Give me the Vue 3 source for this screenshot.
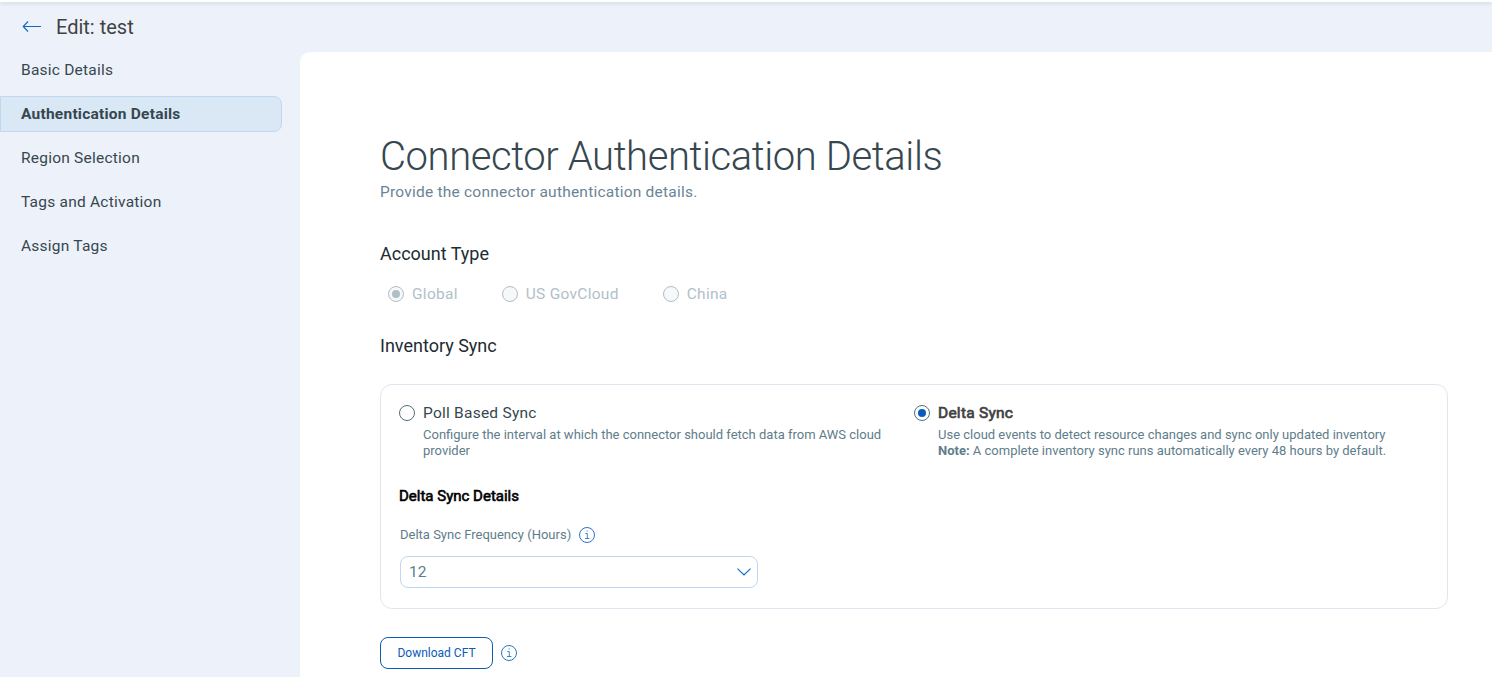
<template>
  <div class="page">
    <div class="top-strip"></div>
    <header class="header">
      <svg class="back" width="20" height="12" viewBox="0 0 20 12">
        <path d="M19 5.5H1.4M6 0.5L1.2 5.5l4.8 5" fill="none" stroke="currentColor" stroke-width="1.1" />
      </svg>
      <span class="title">Edit: test</span>
    </header>
    <div class="body">
      <nav class="sidebar">
        <div
          v-for="step in steps"
          :key="step"
          class="step"
          :class="{ active: step === current }"
          @click="current = step"
        >{{ step }}</div>
      </nav>
      <main class="content">
        <h1>Connector Authentication Details</h1>
        <p class="subtitle">Provide the connector authentication details.</p>

        <h2>Account Type</h2>
        <div class="accounts">
          <div v-for="a in accounts" :key="a" class="option disabled">
            <span class="radio" :class="{ checked: a === 'Global' }"></span>
            <span>{{ a }}</span>
          </div>
        </div>

        <h2 class="inventory">Inventory Sync</h2>
        <section class="card">
          <div class="modes">
            <div class="mode" @click="mode = 'poll'">
              <span class="radio" :class="{ checked: mode === 'poll' }"></span>
              <div>
                <div class="mode-name" :class="{ bold: mode === 'poll' }">Poll Based Sync</div>
                <div class="desc poll-desc">Configure the interval at which the connector should fetch data from AWS cloud provider</div>
              </div>
            </div>
            <div class="mode" @click="mode = 'delta'">
              <span class="radio" :class="{ checked: mode === 'delta' }"></span>
              <div>
                <div class="mode-name" :class="{ bold: mode === 'delta' }">Delta Sync</div>
                <div class="desc">
                  Use cloud events to detect resource changes and sync only updated inventory<br />
                  <b>Note:</b> A complete inventory sync runs automatically every 48 hours by default.
                </div>
              </div>
            </div>
          </div>
          <h3>Delta Sync Details</h3>
          <div class="label">
            <span>Delta Sync Frequency (Hours)</span>
            <svg class="info" width="16" height="16" viewBox="0 0 16 16">
              <circle cx="8" cy="8" r="7.5" />
              <path d="M6.3 6.5h2v5M6 11.5h4.4M7.6 4h1.2" />
            </svg>
          </div>
          <div class="select">
            <span>{{ frequency }}</span>
            <svg width="14" height="8" viewBox="0 0 14 8">
              <path d="M0.5 0.7L7 7l6.5-6.3" fill="none" stroke="currentColor" stroke-width="1.1" />
            </svg>
          </div>
        </section>

        <div class="download">
          <button>Download CFT</button>
          <svg class="info" width="16" height="16" viewBox="0 0 16 16">
            <circle cx="8" cy="8" r="7.5" />
            <path d="M6.3 6.5h2v5M6 11.5h4.4M7.6 4h1.2" />
          </svg>
        </div>
      </main>
    </div>
  </div>
</template>

<script setup>
import { ref } from 'vue'

const steps = ['Basic Details', 'Authentication Details', 'Region Selection', 'Tags and Activation', 'Assign Tags']
const current = ref('Authentication Details')
const accounts = ['Global', 'US GovCloud', 'China']
const mode = ref('delta')
const frequency = ref(12)
</script>

<style>
body { margin: 0; overflow: hidden; }
</style>

<style scoped>
.page {
  display: flex;
  flex-direction: column;
  height: 100vh;
  overflow: hidden;
  background: #edf2fa;
  color: #36474f;
  font-family: Roboto, "Liberation Sans", sans-serif;
}
.top-strip {
  height: 2px;
  flex-shrink: 0;
  background: #fff;
  box-shadow: 0 1px 4px rgba(60, 80, 100, 0.25);
}
.header {
  display: flex;
  align-items: center;
  height: 50px;
  flex-shrink: 0;
  padding-left: 22px;
  gap: 14px;
  color: #424242;
}
.back { color: #1067bd; }
.title { font-size: 20px; line-height: 24px; }
.body { display: flex; flex: 1; min-height: 0; }
.sidebar { width: 282px; margin-right: 18px; flex-shrink: 0; }
.step {
  box-sizing: border-box;
  height: 36px;
  margin-bottom: 8px;
  padding-left: 20px;
  border: 1px solid transparent;
  border-radius: 0 8px 8px 0;
  font-size: 15.5px;
  line-height: 34px;
  letter-spacing: 0.23px;
  cursor: pointer;
}
.step.active { background: #dae8f5; border-color: #bfd7ef; font-weight: 700; }
.content {
  flex: 1;
  box-sizing: border-box;
  padding: 81px 44px 0 80px;
  background: #fff;
  border-top-left-radius: 10px;
}
h1 {
  margin: 0;
  font-size: 40px;
  line-height: 48px;
  font-weight: 300;
  letter-spacing: -0.41px;
}
.subtitle { margin: 1px 0 0; font-size: 15.5px; line-height: 20px; letter-spacing: 0.22px; color: #6b8495; }
h2 { margin: 40px 0 0; font-size: 18px; line-height: 24px; font-weight: 400; color: #212b31; }
.accounts { display: flex; gap: 44px; margin-top: 18px; padding-left: 8px; }
.option { display: flex; align-items: center; gap: 8px; height: 20px; font-size: 15.5px; letter-spacing: 0.28px; }
.disabled { color: #b2c0c8; }
.radio {
  display: flex;
  box-sizing: border-box;
  width: 16px;
  height: 16px;
  flex-shrink: 0;
  border: 1px solid #546e7a;
  border-radius: 50%;
}
.radio.checked::after {
  content: "";
  width: 8px;
  height: 8px;
  margin: auto;
  border-radius: 50%;
  background: #0a5cb8;
}
.disabled .radio { border-color: #b0bec5; background: #f6f8fa; }
.disabled .radio.checked::after { background: #b0bec5; }
h2.inventory { margin-top: 30px; }
.card {
  box-sizing: border-box;
  height: 225px;
  margin-top: 26px;
  padding: 18px;
  border: 1px solid #e2e4ef;
  border-radius: 12px;
}
.modes { display: flex; }
.mode { display: flex; gap: 8px; width: 515px; flex-shrink: 0; }
.mode .radio { margin-top: 2px; }
.mode-name { font-size: 15.5px; line-height: 20px; letter-spacing: 0.24px; }
.bold { color: #424242; -webkit-text-stroke: 0.7px currentColor; }
.desc { margin-top: 4px; font-size: 13px; line-height: 16px; color: #607d8b; white-space: nowrap; }
.poll-desc { width: 470px; white-space: normal; }
h3 {
  margin: 27px 0 0;
  font-size: 15px;
  line-height: 20px;
  font-weight: 400;
  color: #000;
  -webkit-text-stroke: 0.6px currentColor;
}
.label {
  display: flex;
  align-items: center;
  gap: 8px;
  height: 20px;
  margin: 19px 0 0 1px;
  font-size: 13px;
  line-height: 16px;
  color: #607d8b;
}
.label span { margin-top: -1px; }
.info { fill: none; stroke: #1067bd; stroke-width: 0.9; }
.info path { stroke-width: 0.8; }
.select {
  box-sizing: border-box;
  display: flex;
  align-items: center;
  justify-content: space-between;
  width: 358px;
  height: 32px;
  margin: 11px 0 0 1px;
  padding: 0 6px 0 8px;
  border: 1px solid #bfd7ef;
  border-radius: 8px;
  font-size: 15.5px;
  line-height: 20px;
  color: #607d8b;
}
.select svg { color: #1067bd; }
.download { display: flex; align-items: center; gap: 8px; margin-top: 28px; }
button {
  width: 113px;
  height: 32px;
  padding: 0;
  border: 1px solid #0a5cb8;
  border-radius: 8px;
  background: #fff;
  color: #0a5cb8;
  font: 12px Roboto, "Liberation Sans", sans-serif;
  cursor: pointer;
}
</style>
